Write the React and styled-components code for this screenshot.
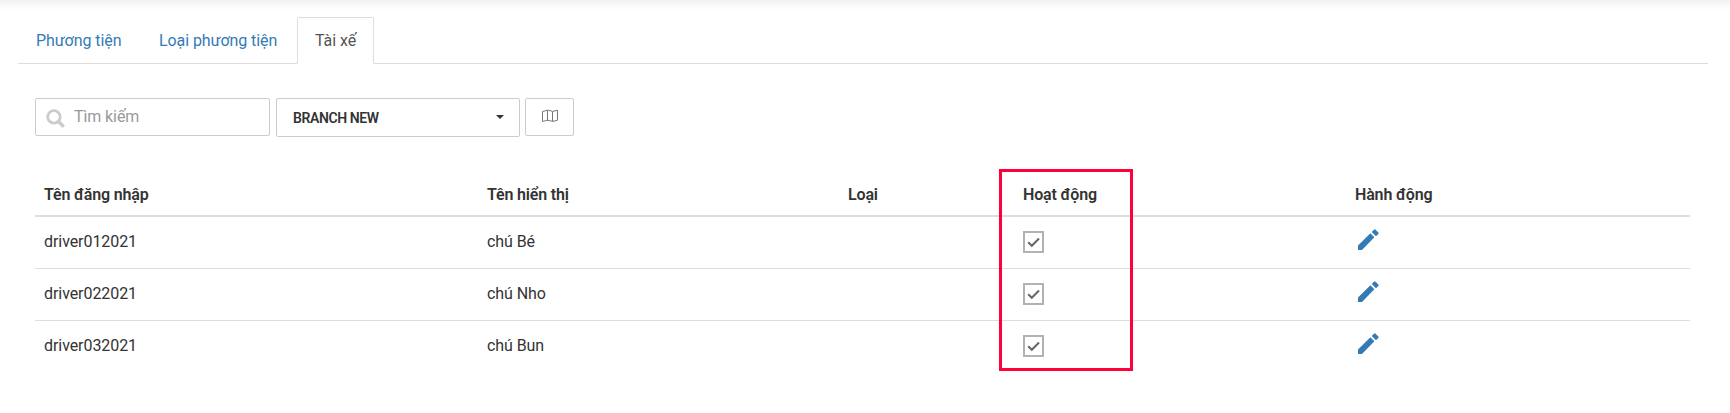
import React from "react";
import styled, { createGlobalStyle } from "styled-components";

const GlobalStyle = createGlobalStyle`
  *, *::before, *::after { box-sizing: border-box; }
  body { margin: 0; background: #fff; color: #333; font: 400 16px/22px Roboto, "Noto Sans", sans-serif; letter-spacing: -0.07px; }
`;

const Page = styled.main`
  height: 413px;
  padding: 17px 22px 0 18px;
  overflow: hidden;
  background: linear-gradient(#f0f0f0 0, #f8f8f8 4px, #fdfdfd 8px, #fff 12px);
`;

const Tabs = styled.nav`
  display: flex;
  gap: 2px;
  height: 47px;
  border-bottom: 1px solid #ddd;
`;

const Tab = styled.a`
  width: ${(p) => p.$width}px;
  height: 47px;
  padding: 12px 0 0 17px;
  border: 1px solid ${(p) => (p.$active ? "#ddd" : "transparent")};
  border-bottom-color: ${(p) => (p.$active ? "#fff" : "transparent")};
  border-radius: 2px 2px 0 0;
  background: ${(p) => (p.$active ? "#fff" : "transparent")};
  color: ${(p) => (p.$active ? "#555" : "#337ab7")};
  white-space: nowrap;
`;

const Panel = styled.section`
  padding: 34px 18px 0 17px;
`;

const Toolbar = styled.div`
  display: flex;
  align-items: flex-start;
  height: 39px;
`;

const SearchBox = styled.label`
  display: flex;
  align-items: center;
  width: 235px;
  height: 38px;
  margin-right: 6px;
  padding-left: 10px;
  border: 1px solid #ccc;
  border-radius: 2px;
  svg { margin-top: 2px; }
`;

const SearchInput = styled.input`
  width: 180px;
  height: 22px;
  margin: 0 0 0 9px;
  padding: 0;
  border: 0;
  outline: 0;
  background: transparent;
  font: inherit;
  letter-spacing: -0.1px;
  &::placeholder { color: #999; opacity: 1; }
`;

const BranchSelect = styled.button`
  display: flex;
  align-items: center;
  justify-content: space-between;
  width: 244px;
  height: 39px;
  margin-right: 5px;
  padding: 1px 15px 0 16px;
  border: 1px solid #ccc;
  border-radius: 2px;
  background: #fff;
  color: #333;
  font: 600 14px/20px Roboto, sans-serif;
  letter-spacing: -0.4px;
`;

const Caret = styled.span`
  margin-bottom: 3px;
  border: 4.5px solid transparent;
  border-top-color: #333;
  border-bottom: 0;
`;

const MapButton = styled.button`
  display: flex;
  align-items: center;
  justify-content: center;
  width: 49px;
  height: 38px;
  padding: 0 0 3px 1px;
  border: 1px solid #ccc;
  border-radius: 2px;
  background: #fff;
`;

const TableFrame = styled.div`
  position: relative;
  margin-top: 34px;
`;

const Table = styled.table`
  width: 1655px;
  table-layout: fixed;
  border-collapse: separate;
  border-spacing: 0;
`;

const HeadCell = styled.th`
  width: ${(p) => p.$width}px;
  height: 46px;
  padding: 4px 9px 0;
  border-bottom: 2px solid #ddd;
  font-weight: 600;
  letter-spacing: -0.16px;
  text-align: left;
  vertical-align: middle;
`;

const Cell = styled.td`
  height: 52px;
  padding: 14px 9px 0;
  border-bottom: 1px solid #ddd;
  vertical-align: top;
  tr:last-child & { border-bottom-color: transparent; }
`;

const CheckBox = styled.span`
  display: flex;
  align-items: center;
  justify-content: center;
  width: 21px;
  height: 22px;
  border: 2px solid #b2b2b2;
`;

const EditLink = styled.a`
  display: block;
  width: 28px;
  height: 28px;
  margin: -5px 0 0;
`;

const Highlight = styled.div`
  position: absolute;
  left: 964px;
  top: -2px;
  width: 134px;
  height: 202px;
  border: 3px solid #ff0038;
  pointer-events: none;
`;

const SearchIcon = () => (
  <svg width="19" height="19" viewBox="0 0 18 18" fill="none" stroke="#ccc">
    <circle cx="7.5" cy="7.5" r="5.9" strokeWidth="2.7" />
    <path d="M11.8 11.8L16.8 16.8" strokeWidth="3.3" />
  </svg>
);

const MapIcon = () => (
  <svg width="18" height="14" viewBox="0 0 18 14" fill="none" stroke="#777" strokeWidth="1">
    <path d="M1.5 2.5Q4 2 6 1.2Q9 1.4 11.5 2.4Q14 2 16.5 1.2V11.2Q14 12 11.5 12.4Q9 11.5 6 11.2Q4 12 1.5 12.5Z" />
    <path d="M6.5 1.5V11.2M11.5 2.6V12.4" />
  </svg>
);

const CheckIcon = () => (
  <svg width="13" height="12" viewBox="0 0 13 12" fill="none" stroke="#666" strokeWidth="2">
    <path d="M1.2 6.3L4.8 9.8L12 2.5" />
  </svg>
);

const PencilIcon = () => (
  <svg width="28" height="28" viewBox="0 0 28 28" fill="#337ab7">
    <path d="M3 19.6L15.4 7.2L19.4 11.2L7 24H3Z" />
    <path d="M16.7 6L19 3.7Q19.8 3 20.6 3.7L23.3 6.4Q24.1 7.2 23.3 8L21 10.2Z" />
  </svg>
);

const tabs = [
  { label: "Phương tiện", width: 121 },
  { label: "Loại phương tiện", width: 154 },
  { label: "Tài xế", width: 77, active: true },
];

const columns = [
  { label: "Tên đăng nhập", width: 443 },
  { label: "Tên hiển thị", width: 361 },
  { label: "Loại", width: 175 },
  { label: "Hoạt động", width: 332 },
  { label: "Hành động", width: 344 },
];

const drivers = [
  { login: "driver012021", name: "chú Bé" },
  { login: "driver022021", name: "chú Nho" },
  { login: "driver032021", name: "chú Bun" },
];

export default function App() {
  return (
    <>
      <GlobalStyle />
      <Page>
        <Tabs>
          {tabs.map((t) => (
            <Tab key={t.label} $width={t.width} $active={t.active}>{t.label}</Tab>
          ))}
        </Tabs>
        <Panel>
          <Toolbar>
            <SearchBox>
              <SearchIcon />
              <SearchInput placeholder="Tìm kiếm" />
            </SearchBox>
            <BranchSelect>BRANCH NEW<Caret /></BranchSelect>
            <MapButton><MapIcon /></MapButton>
          </Toolbar>
          <TableFrame>
            <Table>
              <thead>
                <tr>
                  {columns.map((c) => <HeadCell key={c.label} $width={c.width}>{c.label}</HeadCell>)}
                </tr>
              </thead>
              <tbody>
                {drivers.map((d) => (
                  <tr key={d.login}>
                    <Cell>{d.login}</Cell>
                    <Cell>{d.name}</Cell>
                    <Cell />
                    <Cell><CheckBox><CheckIcon /></CheckBox></Cell>
                    <Cell><EditLink><PencilIcon /></EditLink></Cell>
                  </tr>
                ))}
              </tbody>
            </Table>
            <Highlight />
          </TableFrame>
        </Panel>
      </Page>
    </>
  );
}
